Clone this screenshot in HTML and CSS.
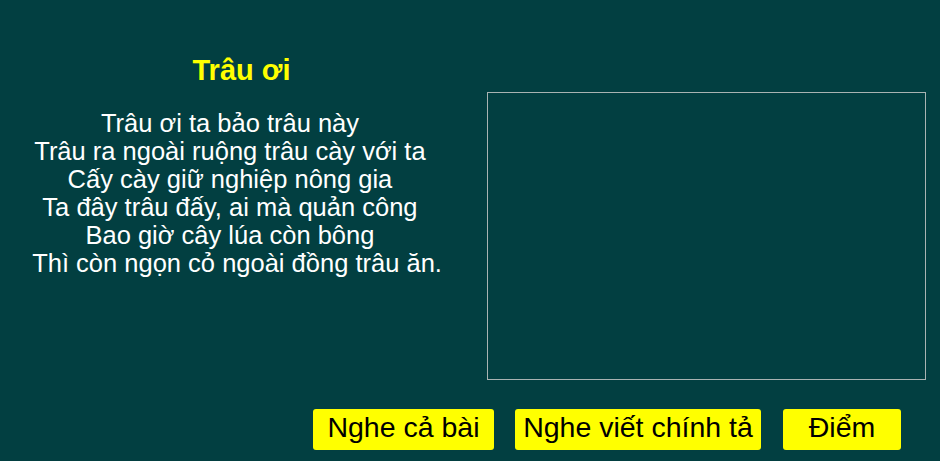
FILE: index.html
```html
<!DOCTYPE html>
<html lang="vi">
<head>
	<title>Trâu ơi - Nghe viết chính tả</title>
	<meta charset="utf-8">
	<meta name="viewport" content="width=device-width,initial-scale=1">
	<link rel="stylesheet" href="styles.css">
</head>
<body>
	<main class="lesson">
		<div class="board">
			<section class="poem">
				<h1 class="poem-title">Trâu ơi</h1>
				<p class="poem-text">
					Trâu ơi ta bảo trâu này&nbsp;<br>
					Trâu ra ngoài ruộng trâu cày với ta&nbsp;<br>
					Cấy cày giữ nghiệp nông gia&nbsp;<br>
					Ta đây trâu đấy, ai mà quản công&nbsp;<br>
					Bao giờ cây lúa còn bông&nbsp;<br>
					&nbsp;Thì còn ngọn cỏ ngoài đồng trâu ăn.
				</p>
			</section>
			<div class="answer" id="answer"></div>
		</div>
		<div class="controls">
			<button class="btn btn-all" type="button">Nghe cả bài</button>
			<button class="btn btn-dictate" type="button">Nghe viết chính tả</button>
			<button class="btn btn-score" type="button">Điểm</button>
		</div>
	</main>
</body>
</html>
```
FILE: styles.css
```css
html, body {
	height: 100%;
}

body {
	background: #023f41;
	color: #fff;
	font: 25.5px "Liberation Sans", Arial, sans-serif;
	margin: 0;
	overflow: hidden;
}

.board {
	display: flex;
	align-items: flex-start;
}

.poem {
	padding-top: 54px;
	text-align: center;
	width: 467px;
}

.poem-title {
	color: #ff0;
	font-size: 29px;
	font-weight: bold;
	line-height: 33px;
	margin: 0;
	padding-left: 16px;
}

.poem-text {
	line-height: 28px;
	margin: 22px 0 0;
}

.answer {
	border: 1px solid #a9b3b2;
	height: 286px;
	margin: 92px 0 0 20px;
	width: 437px;
}

.controls {
	display: flex;
	justify-content: flex-end;
	gap: 21px;
	margin-top: 29px;
	padding-right: 39px;
}

.btn {
	background: #ff0;
	border: none;
	border-radius: 3px;
	color: #000;
	cursor: pointer;
	font: 28.5px "Liberation Sans", Arial, sans-serif;
	height: 41px;
	line-height: 36px;
	padding: 0 0 5px;
	text-align: center;
}

.btn-all {
	width: 181px;
}

.btn-dictate {
	width: 246px;
}

.btn-score {
	margin-left: 1px;
	width: 118px;
}
```
